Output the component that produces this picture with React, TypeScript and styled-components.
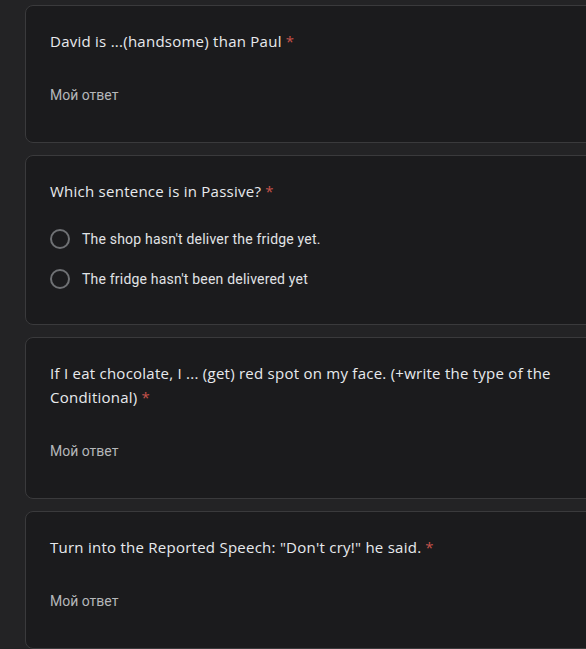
import React from 'react';
import styled, { createGlobalStyle } from 'styled-components';

const GlobalStyle = createGlobalStyle`
  html, body {
    margin: 0;
    padding: 0;
    background: #232325;
    overflow: hidden;
  }
`;

const Page = styled.div`
  display: flex;
  flex-direction: column;
  gap: 12px;
  padding: 5px 0 0 25px;
  width: 680px;
`;

const Card = styled.div`
  background: #1b1b1d;
  border: 1px solid #3a3a3c;
  border-radius: 8px;
  padding: 23px 24px 0;
  display: flex;
  flex-direction: column;
`;

const Question = styled.div`
  font-family: 'Open Sans', 'Liberation Sans', sans-serif;
  font-size: 15px;
  line-height: 24px;
  color: #e8eaed;
  max-width: 520px;
  letter-spacing: 0.25px;
`;

const Required = styled.span`
  color: #c5524b;
  margin-left: 4px;
`;

const Answer = styled.div`
  font-family: Roboto, 'Liberation Sans', sans-serif;
  font-size: 14px;
  line-height: 20px;
  color: #b5b7ba;
  margin-top: 32px;
  padding-bottom: 37px;
`;

const Options = styled.div`
  display: flex;
  flex-direction: column;
  gap: 20px;
  margin-top: 26px;
  padding-bottom: 35px;
`;

const Option = styled.label`
  display: flex;
  align-items: center;
  gap: 12px;
  font-family: Roboto, 'Liberation Sans', sans-serif;
  font-size: 14px;
  line-height: 20px;
  letter-spacing: 0.2px;
  color: #e1e3e6;
`;

const Radio = styled.span`
  width: 16px;
  height: 16px;
  border: 2px solid #6f7174;
  border-radius: 50%;
  flex-shrink: 0;
`;

export default function App() {
  return (
    <>
      <GlobalStyle />
      <Page>
        <Card>
          <Question>
            David is ...(handsome) than Paul
            <Required>*</Required>
          </Question>
          <Answer>Мой ответ</Answer>
        </Card>
        <Card>
          <Question>
            Which sentence is in Passive?
            <Required>*</Required>
          </Question>
          <Options>
            <Option>
              <Radio />
              The shop hasn't deliver the fridge yet.
            </Option>
            <Option>
              <Radio />
              The fridge hasn't been delivered yet
            </Option>
          </Options>
        </Card>
        <Card>
          <Question>
            If I eat chocolate, I ... (get) red spot on my face. (+write the type of the Conditional)
            <Required>*</Required>
          </Question>
          <Answer>Мой ответ</Answer>
        </Card>
        <Card>
          <Question>
            Turn into the Reported Speech: "Don't cry!" he said.
            <Required>*</Required>
          </Question>
          <Answer>Мой ответ</Answer>
        </Card>
      </Page>
    </>
  );
}
